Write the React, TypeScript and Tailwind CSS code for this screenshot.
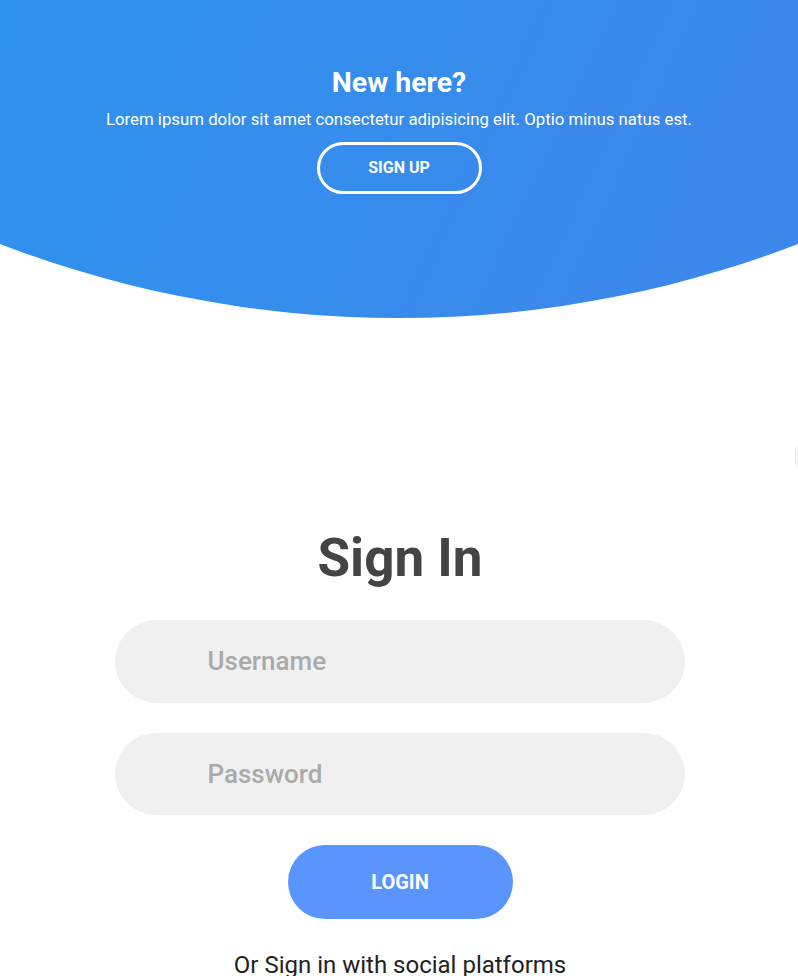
export default function App() {
  return (
    <div className="relative min-h-[976px] w-full overflow-hidden bg-white font-['Roboto',sans-serif]">
      {/* big gradient circle behind the top panel */}
      <div className="absolute left-1/2 top-[-1908px] h-[2226px] w-[2226px] -translate-x-1/2 rounded-full bg-[linear-gradient(115deg,#1ea3f2_0%,#2699ef_34%,#3a89eb_70%,#4482ea_100%)]" />

      {/* faint edge of the off-screen form */}
      <div className="absolute left-[795px] top-[441px] h-[31px] w-[12px] rounded-l-full border-l border-[#e2e2e2] bg-[#fafafa]" />

      <div className="relative flex flex-col items-center pt-[65px] text-white">
        <h3 className="text-[28.5px] font-bold leading-[36px]">New here?</h3>
        <p className="mt-[7px] text-[16.8px] leading-[22px]">
          Lorem ipsum dolor sit amet consectetur adipisicing elit. Optio minus natus est.
        </p>
        <button
          type="button"
          className="mt-[12px] flex h-[52px] w-[165px] items-center justify-center rounded-full border-[3px] border-white text-[16px] font-bold"
        >
          SIGN UP
        </button>
      </div>

      <form className="relative mt-[328px] flex flex-col items-center pl-[2px]">
        <h2 className="mb-[11px] text-[53px] font-bold leading-[72px] text-[#444]">Sign In</h2>
        <div className="my-[15px] grid h-[83px] w-[570px] grid-cols-[15%_85%] rounded-full bg-[#f0f0f0] px-[10px]">
          <span />
          <input
            type="text"
            placeholder="Username"
            className="bg-transparent text-[26px] font-medium text-[#333] outline-none placeholder:text-[#aaa]"
          />
        </div>
        <div className="my-[15px] grid h-[82px] w-[570px] grid-cols-[15%_85%] rounded-full bg-[#f0f0f0] px-[10px]">
          <span />
          <input
            type="password"
            placeholder="Password"
            className="bg-transparent text-[26px] font-medium text-[#333] outline-none placeholder:text-[#aaa]"
          />
        </div>
        <button
          type="button"
          className="my-[15px] h-[74px] w-[225px] rounded-full bg-[#5995fd] text-[20px] font-bold text-white"
        >
          LOGIN
        </button>
        <p className="mt-[13px] text-[24px] text-[#222]">Or Sign in with social platforms</p>
      </form>
    </div>
  );
}
